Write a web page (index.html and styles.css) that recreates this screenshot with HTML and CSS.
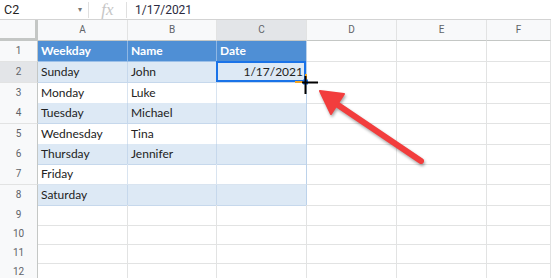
FILE: index.html
```html
<!DOCTYPE html>
<html lang="en">
<head>
    <meta charset="UTF-8">
    <title>Sheet</title>
    <link rel="stylesheet" href="styles.css">
</head>
<body>
    <div class="formula-bar">
        <div class="name-box">C2</div>
        <span class="caret">&#9662;</span>
        <span class="sep"></span>
        <span class="fx">fx</span>
        <span class="sep"></span>
        <div class="formula">1/17/2021</div>
    </div>

    <div class="sheet">
        <div class="row col-head">
            <div class="corner"></div>
            <div>A</div><div>B</div><div class="active">C</div><div>D</div><div>E</div><div>F</div>
        </div>
        <div class="row h21">
            <div class="num">1</div>
            <div class="cell th">Weekday</div><div class="cell th">Name</div><div class="cell th last">Date</div>
            <div class="cell"></div><div class="cell"></div><div class="cell"></div>
        </div>
        <div class="row h21">
            <div class="num active">2</div>
            <div class="cell band">Sunday</div><div class="cell band">John</div><div class="cell band last right selected">1/17/2021</div>
            <div class="cell"></div><div class="cell"></div><div class="cell"></div>
        </div>
        <div class="row">
            <div class="num">3</div>
            <div class="cell tb">Monday</div><div class="cell tb">Luke</div><div class="cell tb last"></div>
            <div class="cell"></div><div class="cell"></div><div class="cell"></div>
        </div>
        <div class="row h21">
            <div class="num">4</div>
            <div class="cell band">Tuesday</div><div class="cell band">Michael</div><div class="cell band last"></div>
            <div class="cell"></div><div class="cell"></div><div class="cell"></div>
        </div>
        <div class="row">
            <div class="num">5</div>
            <div class="cell tb">Wednesday</div><div class="cell tb">Tina</div><div class="cell tb last"></div>
            <div class="cell"></div><div class="cell"></div><div class="cell"></div>
        </div>
        <div class="row">
            <div class="num">6</div>
            <div class="cell band">Thursday</div><div class="cell band">Jennifer</div><div class="cell band last"></div>
            <div class="cell"></div><div class="cell"></div><div class="cell"></div>
        </div>
        <div class="row h21">
            <div class="num">7</div>
            <div class="cell tb">Friday</div><div class="cell tb"></div><div class="cell tb last"></div>
            <div class="cell"></div><div class="cell"></div><div class="cell"></div>
        </div>
        <div class="row">
            <div class="num">8</div>
            <div class="cell band">Saturday</div><div class="cell band"></div><div class="cell band last"></div>
            <div class="cell"></div><div class="cell"></div><div class="cell"></div>
        </div>
        <div class="row h19">
            <div class="num">9</div>
            <div class="cell"></div><div class="cell"></div><div class="cell"></div>
            <div class="cell"></div><div class="cell"></div><div class="cell"></div>
        </div>
        <div class="row h19">
            <div class="num">10</div>
            <div class="cell"></div><div class="cell"></div><div class="cell"></div>
            <div class="cell"></div><div class="cell"></div><div class="cell"></div>
        </div>
        <div class="row h19">
            <div class="num">11</div>
            <div class="cell"></div><div class="cell"></div><div class="cell"></div>
            <div class="cell"></div><div class="cell"></div><div class="cell"></div>
        </div>
        <div class="row h19">
            <div class="num">12</div>
            <div class="cell"></div><div class="cell"></div><div class="cell"></div>
            <div class="cell"></div><div class="cell"></div><div class="cell"></div>
        </div>
    </div>

    <!-- fill handle, cursor and the red pointer arrow -->
    <svg class="overlay" width="551" height="278" viewBox="0 0 551 278">
        <g class="handle">
            <line x1="295" y1="82" x2="306" y2="82" stroke="#f5a623" stroke-width="2"/>
            <line x1="306" y1="74" x2="306" y2="82" stroke="#f5a623" stroke-width="2"/>
            <rect x="303" y="79.5" width="5" height="5" fill="#1a73e8"/>
            <line x1="302" y1="82.5" x2="318" y2="82.5" stroke="#000" stroke-width="2"/>
            <line x1="305.5" y1="76" x2="305.5" y2="94" stroke="#000" stroke-width="2"/>
        </g>
        <g class="arrow">
            <line x1="421" y1="161" x2="332" y2="101" stroke="#f23d3d" stroke-width="6" stroke-linecap="round"/>
            <polygon points="320,91 344,94 331,114" fill="#f23d3d" stroke="#f23d3d" stroke-width="2" stroke-linejoin="round"/>
        </g>
    </svg>
</body>
</html>
```

FILE: styles.css
```css
body {
    margin: 0;
    width: 551px;
    height: 278px;
    overflow: hidden;
    position: relative;
    background-color: #fff;
    font-family: Roboto, Arial, sans-serif;
}
.formula-bar {
    display: flex;
    align-items: center;
    height: 19px;
    border-bottom: 1px solid #d3d3d3;
    font-size: 12px;
    color: #222;
}
.name-box {
    width: 74px;
    padding-left: 4px;
    font-size: 12.5px;
}
.caret {
    font-size: 8px;
    color: #777;
    width: 10px;
}
.sep {
    width: 1px;
    height: 16px;
    background-color: #e0e0e0;
}
.fx {
    font-family: "Liberation Serif", serif;
    font-style: italic;
    font-size: 17px;
    color: #c6c6c6;
    width: 37px;
    text-align: center;
    line-height: 19px;
}
.formula {
    padding-left: 8px;
    color: #2a2a40;
}
.row {
    display: grid;
    grid-template-columns: 38px 90px 89px 90px 90px 90px 64px;
    height: 20px;
}
.row.h21 {
    height: 21px;
}
.row.h19 {
    height: 19px;
}
.row > div {
    box-sizing: border-box;
    border-right: 1px solid #e2e3e3;
    border-bottom: 1px solid #e2e3e3;
}
.col-head {
    height: 21px;
    background-color: #f8f9fa;
}
.col-head > div {
    font-size: 10px;
    color: #5f6368;
    text-align: center;
    line-height: 20px;
    border-bottom-color: #c4c7c5;
}
.col-head .corner {
    border-right: 3px solid #c4c7c5;
    border-bottom: 3px solid #c4c7c5;
}
.col-head .active {
    background-color: #e3e5e8;
}
.num {
    background-color: #f8f9fa;
    font-size: 10px;
    color: #5f6368;
    text-align: center;
    line-height: 20px;
    border-right-color: #c4c7c5 !important;
}
.num.active {
    background-color: #e3e5e8;
}
.cell {
    font-family: Lato, "Liberation Sans", sans-serif;
    font-size: 12px;
    color: #222;
    padding: 0 3px;
    line-height: 20px;
    white-space: nowrap;
}
.cell.th {
    background-color: #4f8fd5;
    color: #fff;
    font-weight: bold;
    border-right-color: #8fb7e4;
    border-bottom-color: #9cc0e8;
}
.cell.band {
    background-color: #dde9f5;
    border-right-color: #c6d8ec;
    border-bottom-color: #c6d8ec;
}
.cell.tb {
    border-right-color: #d9e4f0;
    border-bottom-color: #d9e4f0;
}
.cell.last {
    border-right-color: #bcd2ea;
}
.cell.right {
    text-align: right;
}
.cell.selected {
    position: relative;
}
.cell.selected::after {
    content: "";
    position: absolute;
    top: -1px;
    left: -1px;
    right: 0;
    bottom: 0;
    border: 2px solid #1a73e8;
}
.overlay {
    position: absolute;
    top: 0;
    left: 0;
    pointer-events: none;
}
.arrow {
    filter: drop-shadow(1px 2px 1.5px rgba(0, 0, 0, 0.35));
}
```
